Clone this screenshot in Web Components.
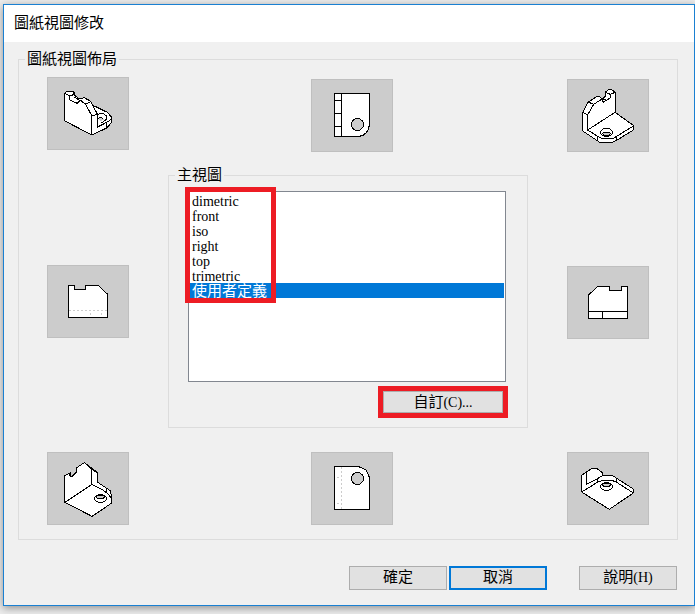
<!DOCTYPE html>
<html lang="zh-Hant">
<head>
<meta charset="utf-8">
<title>圖紙視圖修改</title>
<style>
body {
  margin: 0;
  background: #ececec;
  color: #000;
  font: 15px/18px "Liberation Serif", "Noto Sans CJK TC", sans-serif;
}
</style>
</head>
<body>
<view-dialog></view-dialog>

<script>
const define = (name, html, setup) => {
  const template = document.createElement('template');
  template.innerHTML = html;
  customElements.define(name, class extends HTMLElement {
    constructor() {
      super();
      this.attachShadow({ mode: 'open' }).append(template.content.cloneNode(true));
    }
    connectedCallback() {
      if (setup) setup(this, this.shadowRoot);
    }
  });
};

/* Part drawings use three units per pixel. */
const drawings = {
  dimetric: { label: '左上視圖', box: '24 24 240 213', art: `
    <path d="M74.5 69L82 63H97L103 69V75L118 87L132 83L151 93L157 105L202 127L214 141V158L200 174L156 195L74.5 153Z"/>
    <path d="M75 69L80 73L91 78L97 76L103 70M89.5 78V90L112 100L120 92L103 81M120 90L136 102L151 96M136 102L156 138M154.5 138V195M151 93L172 132L156 138M172.5 132V171L204 155L214 146M199.5 158V173"/>
    <path d="M172 134L178 131H190L199 138V148L190 155L184 158"/>
    <path class="hole" d="M175 148L181 142L192 148L184 154Z" stroke="none"/>
    <path d="M175 146L181 142L190 145"/>` },
  top: { label: '上視圖', box: '36 30 240 213', art: `
    <path d="M103.5 70.5H208.5V160Q207 196 175 199.5H103.5ZM124.5 70V199M103 91.5H124M103 130.5H124M103 169.5H124"/>
    <circle class="hole" cx="172.5" cy="163.5" r="18"/>` },
  iso: { label: '右上視圖', box: '24 30 240 213', art: `
    <path d="M68 127L84 97L109 80H118L127 86L136 79V67L145 59H154L165 66V127L220 166V180L170 211L160 216H118L70 184L68 180Z"/>
    <path d="M68 127L83 135V180L165 127M83 135L101 103L84 96M101 103L126 87L129 97L151 84V73L165 67M136 67L151 73M128 86L139 91M83 180L113 199L125 205H160L170 199L220 168M113 199V213M170 199V211"/>
    <ellipse cx="139.5" cy="187" rx="18" ry="12"/>
    <path class="hole" d="M127 190L132 186H147L152 190L147 196H132Z"/>` },
  left: { label: '左視圖', box: '24 18 240 213', art: `
    <path d="M85.5 76.5H103.5V88.5H136.5V76.5H175.5L202.5 102.5V172.5H85.5Z"/>
    <path class="hidden" d="M87 151.5H201" stroke-dasharray="6 6"/>
    <path class="hidden" d="M151.5 159V165M184.5 159V165"/>` },
  right: { label: '右視圖', box: '24 18 240 213', art: `
    <path d="M112 76.5H148.5V88.5H184.5V76.5H202.5V172.5H85.5V102.5ZM85 151.5H202M127.5 151V172"/>` },
  lowerLeft: { label: '左下視圖', box: '24 24 240 213', art: `
    <path d="M74.5 92L87 85L91 94L97 94L109 82V69L133 53L172 82V111L200 130L211 137L214 151V175L156 214L74.5 172Z"/>
    <path d="M75 172L156 118L190 136L201 144L214 159M154.5 118V71L142 61M154.5 71L172 84M91 94V82M199.5 130V142"/>
    <ellipse cx="181.5" cy="160.5" rx="18" ry="12"/>
    <path class="hole" d="M169 155L173 151H190L194 155L190 161H173Z"/>` },
  bottom: { label: '下視圖', box: '36 24 240 213', art: `
    <path d="M103.5 64.5H175L199 75L208.5 98V193.5H103.5Z"/>
    <path class="hidden" d="M124.5 66V192" stroke-dasharray="6 6"/>
    <path class="hidden" d="M111 97.5H117M111 175.5H117"/>
    <circle class="hole" cx="172.5" cy="100.5" r="18"/>` },
  lowerRight: { label: '右下視圖', box: '24 24 240 213', art: `
    <path d="M65 91L80 80L97 70H110L128 84V92H158L170 100L220 132V144L148 193L65 141Z"/>
    <path d="M80 81V118L112 101L128 92M65 141L112 112L125 107H158L170 112L220 144M112 101V112M170 100V112"/>
    <ellipse cx="139.5" cy="124.5" rx="18" ry="12"/>
    <path class="hole" d="M127 119L132 115H147L152 119L147 125H132Z"/>` }
};

define('view-button', `
<style>
:host { display: block; flex: none; }
button { display: block; width: 82px; height: 73px; padding: 0; border: 1px solid #bfbfbf; border-radius: 0; background: #ccc; }
svg { display: block; width: 80px; height: 71px; fill: #fff; stroke: #000; stroke-width: 3; shape-rendering: crispEdges; }
path + path:not(.hole) { fill: none; }
.hole { fill: #ccc; }
.hole + path { fill: none; }
.hidden { stroke: #ccc; }
</style>
<button type="button"><svg aria-hidden="true"></svg></button>`, (host, root) => {
  const view = drawings[host.getAttribute('view')];
  const svg = root.querySelector('svg');
  svg.setAttribute('viewBox', view.box);
  svg.innerHTML = view.art;
  root.querySelector('button').setAttribute('aria-label', view.label);
});

define('group-box', `
<style>
:host { display: block; }
fieldset { margin: 0; min-width: 0; border: 1px solid #dcdcdc; padding: var(--group-padding, 8px); }
legend { margin-left: var(--legend-indent, 0); padding: 0 2px; }
</style>
<fieldset><legend><slot name="legend"></slot></legend><slot></slot></fieldset>`);

define('push-button', `
<style>
:host { display: block; width: 98px; height: 24px; }
button { display: block; width: 100%; height: 100%; padding: 0 0 var(--label-lift, 2px); border: 1px solid #adadad; border-radius: 0; background: #e1e1e1; color: #000; font: inherit; }
:host([default]) button { border: 2px solid #0078d7; }
</style>
<button type="button"><slot></slot></button>`);

define('view-list', `
<style>
:host { display: block; position: relative; }
select { display: block; box-sizing: border-box; width: 100%; height: 191px; margin: 0; padding: 1px 1px 1px 0; border: 1px solid #828790; border-radius: 0; background: #fff; color: #000; font: 14px/15px "Liberation Serif", "Noto Sans CJK TC", sans-serif; overflow: hidden; outline: 0; }
option { display: flex; align-items: center; box-sizing: border-box; height: 15px; min-height: 15px; padding: 2px 3px 0; }
option:checked { padding: 0 3px 3px; background: #0078d7 linear-gradient(#0078d7, #0078d7); color: #fff; -webkit-text-fill-color: #fff; font-size: 15px; }
.mark { position: absolute; top: -4px; left: -3px; box-sizing: border-box; width: 91px; height: 116px; border: 5px solid #ed1c24; pointer-events: none; }
</style>
<select size="12" aria-label="主視圖">
  <option>dimetric</option><option>front</option><option>iso</option><option>right</option><option>top</option><option>trimetric</option><option selected>使用者定義</option>
</select>
<div class="mark"></div>`);

define('view-dialog', `
<style>
:host { display: block; padding: 4px 0 8px 3px; }
.window { border: 1px solid #1a80d2; background: #f0f0f0; box-shadow: 0 2px 8px #0006; }
header { background: #fff; padding: 9px 10px 10px; }
h1 { margin: 0; font: inherit; }
.layout { margin: 8px 16px 0 14px; --group-padding: 9px 28px 14px; --legend-indent: -22px; }
.views { display: flex; }
.side { display: flex; flex-direction: column; justify-content: space-between; }
.end { padding-top: 2px; }
.center { flex: 1; display: flex; flex-direction: column; align-items: center; padding: 2px 39px 0; }
.center > view-button { margin-left: 8px; }
.main { align-self: stretch; margin: 14px 0 24px; --group-padding: 7px 21px 14px 19px; --legend-indent: -13px; }
.custom { width: 120px; height: 22px; margin: 4px -2px -5px auto; border: 5px solid #ed1c24; --label-lift: 0; }
footer { display: flex; justify-content: flex-end; gap: 2px; padding: 26px 17px 15px; }
.help { margin-left: 30px; }
.latin { font-size: 14px; }
</style>
<div class="window">
  <header><h1>圖紙視圖修改</h1></header>
  <group-box class="layout">
    <span slot="legend">圖紙視圖佈局</span>
    <div class="views">
      <div class="side">
        <view-button view="dimetric"></view-button>
        <view-button view="left"></view-button>
        <view-button view="lowerLeft"></view-button>
      </div>
      <div class="center">
        <view-button view="top"></view-button>
        <group-box class="main">
          <span slot="legend">主視圖</span>
          <view-list></view-list>
          <push-button class="custom">自訂<span class="latin">(C)...</span></push-button>
        </group-box>
        <view-button view="bottom"></view-button>
      </div>
      <div class="side end">
        <view-button view="iso"></view-button>
        <view-button view="right"></view-button>
        <view-button view="lowerRight"></view-button>
      </div>
    </div>
  </group-box>
  <footer>
    <push-button>確定</push-button>
    <push-button default>取消</push-button>
    <push-button class="help">說明<span class="latin">(H)</span></push-button>
  </footer>
</div>`);
</script>
</body>
</html>
